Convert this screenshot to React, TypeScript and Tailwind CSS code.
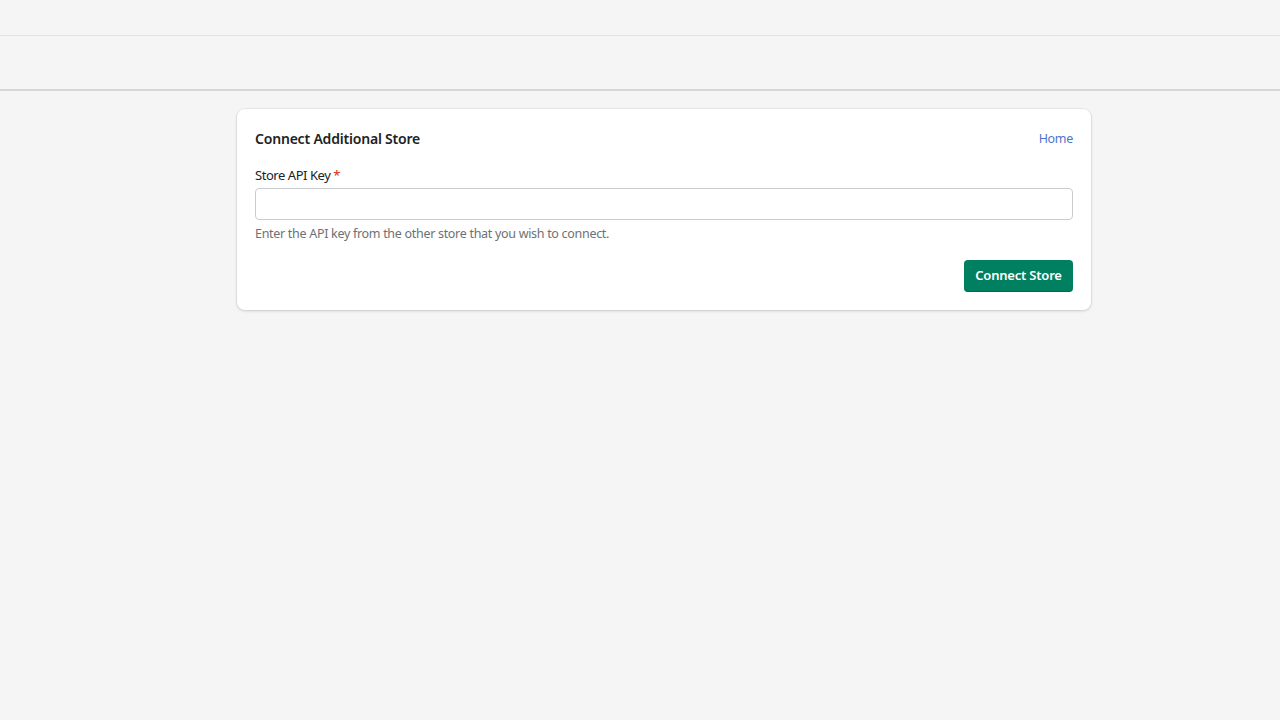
import React from "react";

export default function App() {
  return (
    <div
      className="min-h-[720px] w-full bg-[#f5f5f5] text-[#202223]"
      style={{ fontFamily: '"Noto Sans", "Open Sans", sans-serif' }}
    >
      <div className="h-[36px] border-b border-[#e3e3e3]" />
      <div className="h-[55px] border-b-2 border-[#d6d6d6]" />
      <div className="ml-[237px] mt-[18px] w-[854px] rounded-lg bg-white px-[18px] pb-[18px] pt-[19px] shadow-[0_0_0_1px_rgba(63,63,68,0.05),0_1px_3px_0_rgba(63,63,68,0.2)]">
        <div className="flex h-[20px] items-center justify-between">
          <h2 className="text-[14px] font-semibold tracking-[-0.2px] text-[#202223]">
            Connect Additional Store
          </h2>
          <a className="mt-[3px] text-[12.5px] tracking-[-0.3px] text-[#4f73c9]" href="#">
            Home
          </a>
        </div>
        <div className="mt-[17px]">
          <label className="block h-[20px] text-[13px] leading-[20px] tracking-[-0.45px] text-[#202223]">
            Store API Key <span className="text-[#d82c0d]">*</span>
          </label>
          <input
            className="mt-[3px] block h-[32px] w-full rounded-[4px] border border-[#c9cccf] bg-white px-3 text-[13px] outline-none"
            type="text"
          />
          <p className="mt-[4px] h-[20px] text-[12.5px] leading-[20px] tracking-[-0.3px] text-[#6d7175]">
            Enter the API key from the other store that you wish to connect.
          </p>
        </div>
        <div className="mt-[16px] flex justify-end">
          <button className="h-[32px] w-[109px] rounded-[4px] bg-[#008060] text-[13px] font-semibold tracking-[-0.2px] text-white shadow-[inset_0_-1px_0_rgba(0,0,0,0.2)]">
            Connect Store
          </button>
        </div>
      </div>
    </div>
  );
}
